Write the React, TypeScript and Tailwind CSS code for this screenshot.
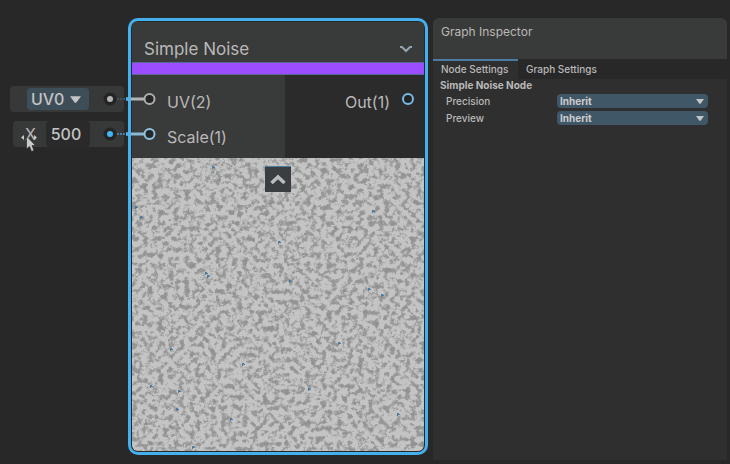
import { useState } from "react";
import type { ReactNode } from "react";

function Caret({ className }: { className: string }) {
  return (
    <svg viewBox="0 0 10 6" className={className} aria-hidden="true">
      <path d="M0 0H10L6 5.4Q5 6.4 4 5.4Z" fill="#c4c4c4" />
    </svg>
  );
}

function Cable({ active }: { active?: boolean }) {
  return (
    <svg viewBox="0 0 56 16" className="absolute top-1/2 left-full z-10 -ml-[22px] h-4 w-14 -translate-y-1/2" aria-hidden="true">
      <circle cx="8" cy="8" r="6.5" fill="#242424" />
      <circle cx="8" cy="8" r="3" fill={active ? "#44b5f2" : "#b4b4b4"} />
      <path d="M15 8H26" stroke={active ? "#4b7ba0" : "#44525b"} strokeWidth="2" strokeDasharray="2 1" />
      <path d="M24 8H42" stroke={active ? "#8bb9d2" : "#b4b4b4"} strokeWidth="3" />
      <path d="M24 8H29" stroke="#44b5f2" strokeWidth="3" />
      <circle cx="47.500" cy="8" r="5" fill="#262626" stroke={active ? "#8fc4e2" : "#b0b0b0"} strokeWidth="2" />
    </svg>
  );
}

function SlotValue({ active, className, children }: { active?: boolean; className: string; children: ReactNode }) {
  return (
    <div className={`relative flex h-[26px] items-center self-end rounded-sm bg-[#373938] ${className}`}>
      {children}
      <Cable active={active} />
    </div>
  );
}

function Pointer() {
  return (
    <svg viewBox="0 0 18 20" className="absolute top-3 left-2 h-5 w-[18px]" aria-hidden="true">
      <path d="M0 4.500L3 2V7ZM13 2L16 4.500L13 7Z" fill="#c8c8c8" />
      <path d="M5.500 3V16L8.500 13.500L10.500 18.500L13 17.500L11 12.500H14.500Z" fill="#c8c8c8" stroke="#2a2a2a" strokeWidth="0.700" />
    </svg>
  );
}

const specks = [
  [146, 83], [73, 114], [75, 117], [236, 130], [249, 136], [157, 122], [38, 190],
  [18, 227], [176, 230], [46, 232], [60, 288], [44, 250], [98, 260], [265, 255],
  [3, 48], [8, 58], [80, 8], [240, 52], [206, 184], [110, 205],
];

function NoisePreview() {
  return (
    <svg className="block h-[293px] w-full" role="img" aria-label="Noise preview">
      <defs>
        <filter id="noise" x="0" y="0" width="100%" height="100%" colorInterpolationFilters="sRGB">
          <feTurbulence type="fractalNoise" baseFrequency="0.19" numOctaves="3" seed="12" />
          <feColorMatrix values="1.200 1.200 0 0 -0.700  1.200 1.200 0 0 -0.700  1.200 1.200 0 0 -0.700  0 0 0 0 1" />
          <feComponentTransfer>
            <feFuncR type="discrete" tableValues="0.57 0.59 0.6 0.6 0.66 0.69 0.75 0.77 0.77 0.77 0.77 0.77" />
            <feFuncG type="discrete" tableValues="0.57 0.59 0.6 0.6 0.67 0.7 0.75 0.77 0.77 0.77 0.77 0.77" />
            <feFuncB type="discrete" tableValues="0.57 0.59 0.6 0.6 0.66 0.69 0.75 0.77 0.77 0.77 0.77 0.77" />
          </feComponentTransfer>
        </filter>
      </defs>
      <rect width="100%" height="100%" filter="url(#noise)" />
      {specks.map(([x, y]) => (
        <path key={`${x}-${y}`} d={`M${x} ${y}h2v1h1v1h-2v1h-1z`} fill="#4b7ba0" />
      ))}
    </svg>
  );
}

function InspectorField({ id, label }: { id: string; label: string }) {
  return (
    <div className="flex h-[17px] items-center pr-[19px] pl-[13px]">
      <label htmlFor={id} className="w-[111px] shrink-0 text-[10px] leading-4 font-medium">{label}</label>
      <div className="relative min-w-0 flex-1">
        <select id={id} className="block h-[14px] w-full appearance-none rounded-sm bg-[#405767] pr-5 pl-[3px] text-[10px] leading-[14px] font-bold text-[#cdcdcd] outline-none">
          <option>Inherit</option>
          <option>Single</option>
          <option>Half</option>
        </select>
        <Caret className="pointer-events-none absolute top-[5px] right-1 h-[5px] w-2" />
      </div>
    </div>
  );
}

export default function App() {
  const [tab, setTab] = useState("node");
  const [scale, setScale] = useState("500");
  const [open, setOpen] = useState(true);

  return (
    <main className="flex min-h-screen items-stretch bg-[#282828] pr-[3px] font-['Inter','Liberation_Sans',sans-serif] text-[#b9b9b9]">
      <section className="flex w-[124px] shrink-0 flex-col gap-[9px] pt-[86px]" aria-label="Slot values">
        <SlotValue className="w-[114px] pl-[17px]">
          <div className="relative">
            <select aria-label="UV channel" className="block h-[22px] w-[62px] appearance-none rounded-sm bg-[#3e4e58] pl-1 text-[16px] leading-[22px] font-medium text-[#c4c4c4] outline-none">
              <option>UV0</option>
              <option>UV1</option>
            </select>
            <Caret className="pointer-events-none absolute top-2 right-2 h-[7px] w-[11px]" />
          </div>
        </SlotValue>
        <SlotValue active className="w-[111px] pl-3">
          <label htmlFor="scale" className="w-[21px] text-[16px] leading-[22px]">X</label>
          <input id="scale" value={scale} onChange={(e) => setScale(e.target.value)} className="h-[26px] w-[44px] rounded-sm bg-[#2a2a2a] pr-1 text-center text-[16px] font-medium text-[#c4c4c4] outline-none" />
          <Pointer />
        </SlotValue>
      </section>

      <article className="mt-[18px] ml-1 w-[300px] shrink-0 self-start overflow-hidden rounded-[10px] border-[3px] border-[#44b0ee] bg-[#282828] p-px">
        <header className="flex h-10 items-center justify-between bg-[#393b3a] pt-[14px] pr-3 pl-3">
          <h1 className="text-[17px] leading-6">Simple Noise</h1>
          <button aria-label="Collapse node">
            <svg viewBox="0 0 12 7" className="h-[7px] w-3" fill="none" aria-hidden="true">
              <path d="M0 1H2L6 5L10 1H12" stroke="#94a3ad" strokeWidth="2" />
            </svg>
          </button>
        </header>
        <div className="h-[13px] border-y border-[#5b6795] bg-[#9b4dff]" />
        <div className="flex h-[83px] text-[16px] leading-6">
          <ul className="w-[153px] bg-[#393b3a] pt-[15px] pl-[35px]">
            <li>UV(2)</li>
            <li className="mt-[11px]">Scale(1)</li>
          </ul>
          <div className="flex flex-1 items-start justify-end gap-[11px] bg-[#2b2b2b] pt-[15px] pr-[9px]">
            <span>Out(1)</span>
            <svg viewBox="0 0 14 14" className="mt-[2px] h-[14px] w-[14px]" aria-hidden="true">
              <circle cx="7" cy="7" r="5" fill="#242424" stroke="#75bde9" strokeWidth="2" />
            </svg>
          </div>
        </div>
        <div className="relative overflow-hidden rounded-b-md">
          {open ? <NoisePreview /> : null}
          <button aria-label="Toggle preview" onClick={() => setOpen(!open)} className="absolute top-2 left-1/2 flex h-[26px] w-[26px] -translate-x-1/2 items-center justify-center border-t border-[#4b7ba0] bg-[#3a3e40]">
            <svg viewBox="0 0 16 11" className="h-[11px] w-4" fill="none" aria-hidden="true">
              <path d="M1.500 9L8 3L14.500 9" stroke="#b9bcbe" strokeWidth="3.500" />
            </svg>
          </button>
        </div>
      </article>

      <aside className="mt-[18px] mb-1 ml-[5px] flex min-w-0 flex-1 flex-col overflow-hidden rounded-t-md bg-[#2f2f2f]">
        <h2 className="h-[41px] bg-[#393b3a] pt-[5px] pl-2 text-[12px] leading-[18px]">Graph Inspector</h2>
        <div role="tablist" className="flex h-5 bg-[#282828] text-[10px] leading-4 font-medium">
          <button role="tab" aria-selected={tab === "node"} onClick={() => setTab("node")} className="w-[85px] border-t-2 border-[#4b7ba0] bg-[#2f2f2f] pb-[5px] pl-2 text-left whitespace-nowrap">Node Settings</button>
          <button role="tab" aria-selected={tab === "graph"} onClick={() => setTab("graph")} className="border-t-2 border-transparent pb-[5px] pl-2 whitespace-nowrap">Graph Settings</button>
        </div>
        <h3 className="pl-[7px] text-[10px] leading-[13px] font-bold">Simple Noise Node</h3>
        <InspectorField id="precision" label="Precision" />
        <InspectorField id="preview" label="Preview" />
      </aside>
    </main>
  );
}
